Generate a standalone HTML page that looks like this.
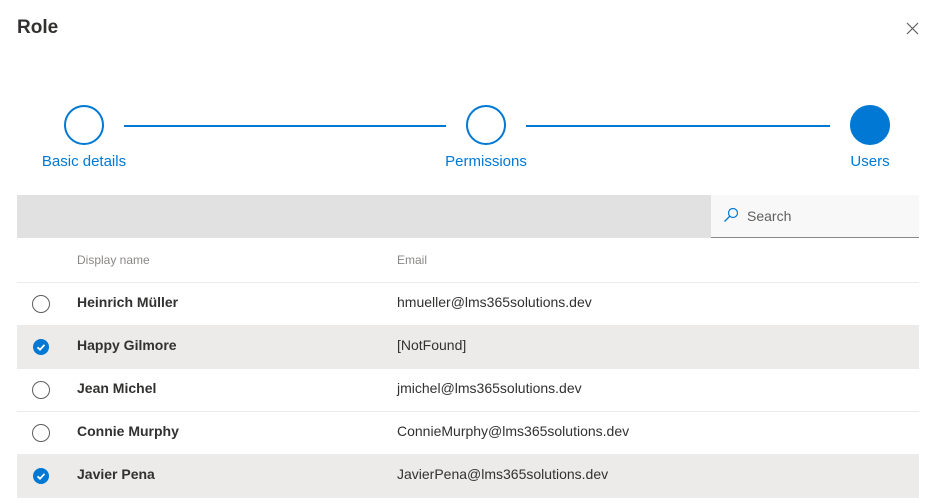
<!DOCTYPE html><html><head><style>
body{margin:0;width:938px;height:504px;background:#fff;font-family:"Liberation Sans",sans-serif;position:relative;overflow:hidden;color:#323130}
.a{position:absolute}
.c{position:absolute;width:36px;height:36px;border:2px solid #0078d4;border-radius:50%;top:105px;background:#fff}
.l{position:absolute;height:2px;background:#0078d4;top:125px}
.lb{position:absolute;top:153px;font-size:15px;color:#0078d4;transform:translateX(-50%)}
.row{position:absolute;left:17px;width:902px;height:42px;border-bottom:1px solid #edebe9;font-size:14px}
.row .n{position:absolute;left:60px;top:11px;font-weight:bold;color:#323130}
.row .e{position:absolute;left:380px;top:11px;color:#323130}
.row .r{position:absolute;left:15px;top:12px;width:16px;height:16px;border:1px solid #605e5c;border-radius:50%}
.sel{background:#edebe9}
.sel .r{border:none;width:16px;height:16px;top:13px;left:16px;background:#0078d4}
</style></head><body>
<div class="a" style="left:17px;top:17px;font-size:19px;font-weight:bold">Role</div>
<svg class="a" style="left:906px;top:22px" width="13" height="13"><path d="M1 1L12 12M12 1L1 12" stroke="#605e5c" stroke-width="1.2"/></svg>
<div class="c" style="left:64px"></div>
<div class="c" style="left:466px"></div>
<div class="c" style="left:850px;background:#0078d4"></div>
<div class="l" style="left:124px;width:322px"></div>
<div class="l" style="left:526px;width:304px"></div>
<div class="lb" style="left:84px">Basic details</div>
<div class="lb" style="left:486px">Permissions</div>
<div class="lb" style="left:870px">Users</div>
<div class="a" style="left:17px;top:195px;width:902px;height:43px;background:#e1e1e1"></div>
<div class="a" style="left:711px;top:195px;width:208px;height:42px;background:#f8f8f8;border-bottom:1px solid #8a8886"></div>
<svg class="a" style="left:723px;top:207px" width="16" height="16"><circle cx="10" cy="6" r="4.5" fill="none" stroke="#0078d4" stroke-width="1.2"/><path d="M7 9L1.5 14.5" stroke="#0078d4" stroke-width="1.3"/></svg>
<div class="a" style="left:747px;top:208px;font-size:14px;color:#605e5c">Search</div>
<div class="a" style="left:17px;top:239px;width:902px;height:43px;border-bottom:1px solid #edebe9"></div>
<div class="a" style="left:77px;top:253px;font-size:12px;color:#8a8886">Display name</div>
<div class="a" style="left:397px;top:253px;font-size:12px;color:#8a8886">Email</div>
<div class="row" style="top:283px"><div class="r"></div><div class="n">Heinrich Müller</div><div class="e">hmueller@lms365solutions.dev</div></div>
<div class="row sel" style="top:326px"><div class="r"><svg width="16" height="16"><path d="M4.5 8.3L7 10.7L11.5 5.8" fill="none" stroke="#fff" stroke-width="1.8"/></svg></div><div class="n">Happy Gilmore</div><div class="e">[NotFound]</div></div>
<div class="row" style="top:369px"><div class="r"></div><div class="n">Jean Michel</div><div class="e">jmichel@lms365solutions.dev</div></div>
<div class="row" style="top:412px"><div class="r"></div><div class="n">Connie Murphy</div><div class="e">ConnieMurphy@lms365solutions.dev</div></div>
<div class="row sel" style="top:455px"><div class="r"><svg width="16" height="16"><path d="M4.5 8.3L7 10.7L11.5 5.8" fill="none" stroke="#fff" stroke-width="1.8"/></svg></div><div class="n">Javier Pena</div><div class="e">JavierPena@lms365solutions.dev</div></div>
</body></html>
